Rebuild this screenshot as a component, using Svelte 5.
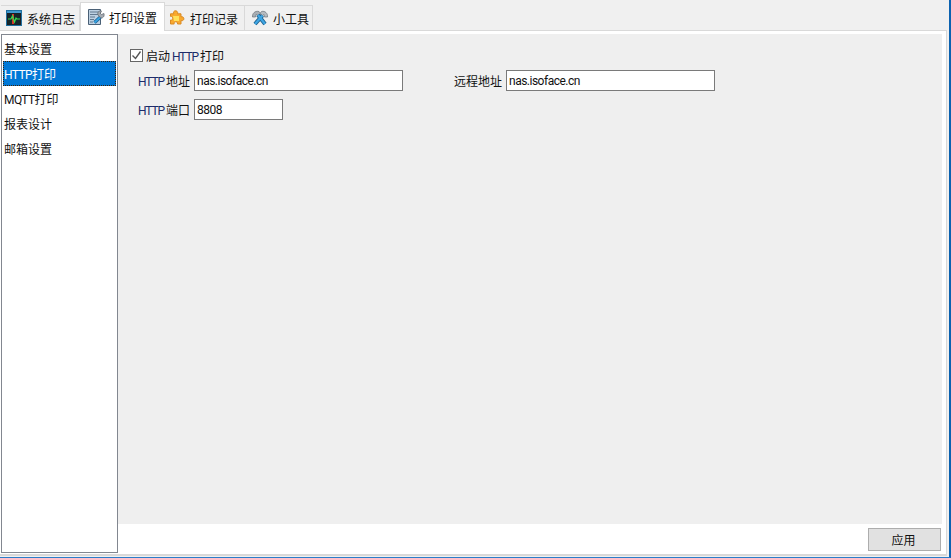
<script lang="ts">
  const tabs = [
    { id: 'log', label: '系统日志' },
    { id: 'print', label: '打印设置' },
    { id: 'record', label: '打印记录' },
    { id: 'tools', label: '小工具' }
  ];
  const menu = [
    { latin: '', label: '基本设置' },
    { latin: 'HTTP', label: '打印' },
    { latin: 'MQTT', label: '打印' },
    { latin: '', label: '报表设计' },
    { latin: '', label: '邮箱设置' }
  ];

  let activeTab = $state('print');
  let activeMenu = $state(1);
  let enabled = $state(true);
  let httpAddr = $state('nas.isoface.cn');
  let remoteAddr = $state('nas.isoface.cn');
  let httpPort = $state('8808');
</script>

<div class="window">
  <div class="client">
    <div class="tabs">
      {#each tabs as t}
        <button class="tab" class:active={activeTab === t.id} onclick={() => (activeTab = t.id)}>
          {#if t.id === 'log'}
            <svg viewBox="0 0 16 16" width="16" height="16">
              <rect x="0.5" y="0.5" width="15" height="15" fill="#1a1f24" stroke="#1f6f9f" />
              <rect x="1" y="1" width="14" height="2" fill="#3f9ad0" />
              <rect x="2" y="4" width="12" height="10" fill="#14272a" />
              <path d="M7 4v10" stroke="#d8352a" stroke-width="2" />
              <path d="M2 9h3l1.500-3 2 6 1.500-4 1 1h3" fill="none" stroke="#37dd4f" stroke-width="1.200" />
            </svg>
          {:else if t.id === 'print'}
            <svg viewBox="0 0 18 18" width="18" height="18">
              <path d="M1.500 1.500h12v15h-12z" fill="#bcd0e2" stroke="#4a6076" />
              <path d="M3 4h9M3 6.500h8M3 9h5M3 11.500h4M3 14h3" stroke="#61788f" />
              <path d="M14 8.500l-6.500 6" stroke="#1d5f94" stroke-width="3.400" />
              <path d="M14 8.500l-6.500 6" stroke="#38a4e0" stroke-width="1.800" />
              <path d="M17 5.500l-2.500 1-1.200-1.200L14.500 3c-2-.7-4.500 1-3.500 4l2.500 2.800c2.500.7 4.200-1.500 3.500-4.300z" fill="#a5abb2" stroke="#5e656c" stroke-width=".7" />
            </svg>
          {:else if t.id === 'record'}
            <svg viewBox="0 0 16 16" width="16" height="16">
              <path d="M5.500 1c2-.8 3.800.8 3 2.800H12v3c1.600-.6 3.300.8 2.800 2.500-.4 1.300-1.600 1.600-2.800 1.200v3.500H8.500c.5-1.600-1-2.600-2.300-2.200-1 .3-1.300 1.300-1 2.200H1.500v-4c1.300.5 2.600-.6 2.300-2C3.500 6.500 2.500 6 1.500 6.400V3.800h3.300C4.200 2.800 4.500 1.500 5.500 1z" fill="#f9a92e" stroke="#d98a24" stroke-width="1" />
              <path d="M4 6h6v5H5z" fill="#ffe25a" />
            </svg>
          {:else}
            <svg viewBox="0 0 18 18" width="18" height="18">
              <path d="M1.500 8C1 4.500 4 1.500 8 2.500L10 5 7 6.500 5 5.500 4.500 8z" fill="#a9afb5" stroke="#6d7379" stroke-width=".7" />
              <path d="M16.500 8C17 4.500 14 1.500 10.500 2.500L9 4.500l2.500 2 1.500-1 .5 2.500z" fill="#b7bcc1" stroke="#6d7379" stroke-width=".7" />
              <path d="M7 6l7 9M11.500 6.500L4 15" stroke="#1f628f" stroke-width="4" />
              <path d="M7 6l7 9M11.500 6.500L4 15" stroke="#3fa6e4" stroke-width="2.200" />
            </svg>
          {/if}
          <span>{t.label}</span>
        </button>
      {/each}
    </div>

    <div class="pane">
      <ul class="menu">
        {#each menu as m, i}
          <li>
            <button class:selected={activeMenu === i} onclick={() => (activeMenu = i)}>
              {#if m.latin}<span class="latin">{m.latin}</span>{/if}{m.label}
            </button>
          </li>
        {/each}
      </ul>

      <div class="main">
        <div class="settings">
          <label class="check">
            <input type="checkbox" bind:checked={enabled} />
            <span class="box">
              {#if enabled}
                <svg viewBox="0 0 11 11" width="11" height="11">
                  <path d="M1.500 5.500l3 3 5-7" fill="none" stroke="#555" stroke-width="1.400" />
                </svg>
              {/if}
            </span>
            <span class="text">启动 <b>HTTP</b> 打印</span>
          </label>
          <div class="row">
            <label class="field">
              <span class="name"><b>HTTP</b> 地址</span>
              <input class="wide" type="text" bind:value={httpAddr} />
            </label>
            <label class="field remote">
              <span class="name">远程地址</span>
              <input class="wide" type="text" bind:value={remoteAddr} />
            </label>
          </div>
          <div class="row">
            <label class="field">
              <span class="name"><b>HTTP</b> 端口</span>
              <input class="short" type="text" bind:value={httpPort} />
            </label>
          </div>
        </div>
        <div class="footer">
          <button class="apply">应用</button>
        </div>
      </div>
    </div>
  </div>
</div>

<style>
  :global(body) {
    margin: 0;
    background: #f0f0f0;
    overflow: hidden;
  }
  .window {
    width: 951px;
    height: 558px;
    box-sizing: border-box;
    border-right: 2px solid #0b62b0;
    border-bottom: 1px solid #2b7cc8;
    padding-right: 2px;
    padding-bottom: 1px;
    font-family: Roboto, "Noto Sans CJK SC", sans-serif;
    font-size: 12px;
    color: #111;
  }
  .client {
    height: 100%;
    display: flex;
    flex-direction: column;
  }
  .tabs {
    display: flex;
    align-items: flex-end;
    height: 31px;
    padding-left: 1px;
    box-sizing: border-box;
    border-bottom: 1px solid #d9d9d9;
  }
  .tab {
    display: flex;
    align-items: center;
    gap: 5px;
    height: 25px;
    padding: 0 4px;
    margin: 0;
    border: 1px solid #d9d9d9;
    border-bottom: none;
    border-left: none;
    background: #f0f0f0;
    font: inherit;
    color: inherit;
    white-space: nowrap;
  }
  .tab:first-child {
    padding-left: 5px;
    width: 79px;
  }
  .tab.active {
    height: 29px;
    width: 85px;
    margin-bottom: -1px;
    background: #fff;
    border-left: 1px solid #d9d9d9;
    padding: 0 4px 0 6px;
    gap: 4px;
  }
  .tab:nth-child(3) { width: 80px; }
  .tab:nth-child(4) {
    width: 68px;
    padding: 0 0 0 6px;
    gap: 4px;
  }
  .pane {
    flex: 1;
    display: flex;
    min-height: 0;
    background: #fff;
    border-bottom: 2px solid #d9d9d9;
    border-right: 1px solid #d9d9d9;
    padding: 3px 0 0 1px;
  }
  .menu {
    list-style: none;
    width: 117px;
    box-sizing: border-box;
    margin: 0 0 1px;
    padding: 1px;
    border: 1px solid #828790;
    background: #fff;
  }
  .menu button {
    display: block;
    width: 100%;
    height: 25px;
    padding: 0;
    border: 1px solid transparent;
    background: none;
    font: inherit;
    color: inherit;
    text-align: left;
  }
  .menu button.selected {
    background: #0078d7;
    color: #fff;
    border: 1px dotted #402000;
  }
  .latin {
    letter-spacing: -0.6px;
  }
  .main {
    flex: 1;
    display: flex;
    flex-direction: column;
    min-width: 0;
  }
  .settings {
    flex: 1;
    background: #efefef;
    margin-right: 4px;
    padding: 14px 0 0 12px;
  }
  .check {
    display: flex;
    align-items: center;
    gap: 3px;
    height: 14px;
  }
  .check input {
    display: none;
  }
  .box {
    width: 13px;
    height: 13px;
    box-sizing: border-box;
    border: 1px solid #666;
    background: #fff;
    display: flex;
    align-items: center;
    justify-content: center;
  }
  .text {
    word-spacing: -1px;
  }
  b {
    font-weight: normal;
    letter-spacing: -1.1px;
    color: #1c2c6a;
  }
  .row {
    display: flex;
    margin-top: 8px;
    padding-left: 8px;
  }
  .field {
    display: flex;
    align-items: center;
    gap: 4px;
  }
  .name {
    width: 52px;
    white-space: nowrap;
    word-spacing: -1px;
  }
  .remote {
    margin-left: 51px;
  }
  .remote .name {
    width: 48px;
  }
  input[type='text'] {
    box-sizing: border-box;
    height: 21px;
    padding: 0 2px;
    margin: 0;
    border: 1px solid #7a7a7a;
    background: #fff;
    font: inherit;
    letter-spacing: -0.5px;
    color: inherit;
    outline: none;
  }
  .wide { width: 209px; }
  .short { width: 89px; }
  .footer {
    height: 30px;
    display: flex;
    justify-content: flex-end;
    align-items: flex-start;
    padding: 4px 5px 0 0;
    box-sizing: border-box;
  }
  .apply {
    width: 73px;
    height: 23px;
    padding: 0 2px 0 0;
    border: 1px solid #adadad;
    background: #e1e1e1;
    font: inherit;
    color: inherit;
  }
</style>
